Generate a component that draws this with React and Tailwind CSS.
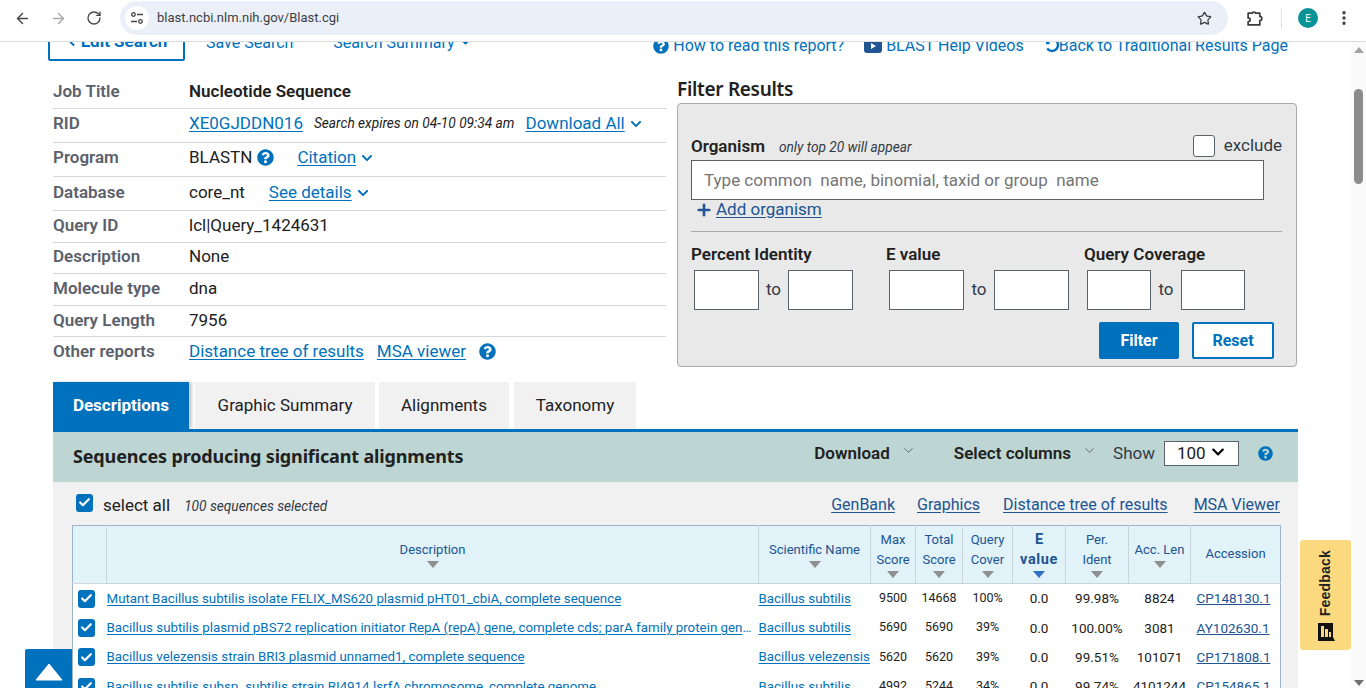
import React from "react";
import { ArrowLeft, ArrowRight, RotateCw, Star, EllipsisVertical, Plus, ChevronDown, Check, ChevronLeft } from "lucide-react";
import { FaQuestionCircle, FaChevronDown, FaCaretDown } from "react-icons/fa";

const Q = ({ cls = "text-[17px]" }) => <FaQuestionCircle className={`${cls} text-[#0071bc] shrink-0`} />;
const Chev = () => <FaChevronDown className="text-[12px] text-[#0071bc] shrink-0" />;
const A = ({ children, cls = "" }) => <a className={`text-[#0071bc] underline underline-offset-2 decoration-1 ${cls}`}>{children}</a>;

const Row = ({ h, label, children, last, pb = "pb-[2px]" }) => (
  <div className={`flex items-center ${h} ${pb} ${last ? "" : "border-b border-[#d6d7d9]"}`}>
    <div className="w-[136px] shrink-0 font-semibold text-[#5b616b]">{label}</div>
    <div className="flex items-center text-[#212121]">{children}</div>
  </div>
);

const Box = ({ w }) => <div className={`${w} h-[40px] bg-white border border-[#5b616b]`} />;

const CB = ({ size = "w-[17px] h-[18px]" }) => (
  <span className={`${size} bg-[#0071bc] rounded-[3px] flex items-center justify-center shrink-0`}>
    <Check className="w-[13px] h-[13px] text-white" strokeWidth={4} />
  </span>
);

const Th = ({ children, caret = "#8f8f8f", cls = "" }) => (
  <th className={`border-l border-[#c8d3da] border-b bg-[#e1f2f9] font-normal text-[13px] leading-[20px] text-[#205493] px-0 align-middle ${cls}`}>
    <div className="flex flex-col items-center -mt-[2px]">
      {children}
      <svg width="12" height="7" viewBox="0 0 12 7" className="mt-[1px]"><path d="M0 0h12L6 7z" fill={caret} /></svg>
    </div>
  </th>
);

const rows = [
  ["Mutant Bacillus subtilis isolate FELIX_MS620 plasmid pHT01_cbiA, complete sequence", "Bacillus subtilis", "9500", "14668", "100%", "0.0", "99.98%", "8824", "CP148130.1"],
  ["Bacillus subtilis plasmid pBS72 replication initiator RepA (repA) gene, complete cds; parA family protein gene, complete sequence", "Bacillus subtilis", "5690", "5690", "39%", "0.0", "100.00%", "3081", "AY102630.1"],
  ["Bacillus velezensis strain BRI3 plasmid unnamed1, complete sequence", "Bacillus velezensis", "5620", "5620", "39%", "0.0", "99.51%", "101071", "CP171808.1"],
  ["Bacillus subtilis subsp. subtilis strain RI4914 lsrfA chromosome, complete genome", "Bacillus subtilis", "4992", "5244", "34%", "0.0", "99.74%", "4101244", "CP154865.1"],
];

export default function App() {
  return (
    <div className="relative w-[1366px] h-[688px] overflow-hidden flex flex-col bg-white font-['Roboto',sans-serif] text-[17px] text-[#212121]">
      {/* browser bar */}
      <div className="relative z-10 h-[42px] shrink-0 bg-white border-b border-[#dcdcdc] flex items-start pt-[1px]">
        <div className="flex items-center w-[120px] h-[34px] pl-[14px] gap-[19px] text-[#474747]">
          <ArrowLeft className="w-[17px] h-[17px]" strokeWidth={2} />
          <ArrowRight className="w-[17px] h-[17px] text-[#a9a9a9]" strokeWidth={2} />
          <RotateCw className="w-[16px] h-[16px]" strokeWidth={2} />
        </div>
        <div className="w-[1108px] h-[34px] bg-[#ebf0f8] rounded-full flex items-center pl-[5px] pr-[16px]">
          <span className="w-[24px] h-[24px] rounded-full bg-white flex items-center justify-center">
            <svg width="14" height="14" viewBox="0 0 14 14" fill="none" stroke="#474747" strokeWidth="1.3"><circle cx="3.5" cy="3.5" r="1.8" /><path d="M7 3.5h6M1 10.5h6" /><circle cx="10.5" cy="10.5" r="1.8" /></svg>
          </span>
          <span className="ml-[8px] text-[13px] text-[#3c4043]">blast.ncbi.nlm.nih.gov/Blast.cgi</span>
          <Star className="ml-auto w-[15px] h-[15px] text-[#3c3c3c]" strokeWidth={2} />
        </div>
        <div className="flex items-center h-[34px] text-[#3c3c3c]">
          <svg width="17" height="15" viewBox="0 0 16 14" fill="none" stroke="#3c3c3c" strokeWidth="1.6" strokeLinejoin="round" className="ml-[18px]">
            <path d="M3 2H6C6 .5 9 .5 9 2H13V5C15.5 5 15.5 9 13 9V13H2V10C4.5 10 4.5 6.5 2 6.5V2z" />
          </svg>
          <span className="ml-[18px] w-px h-[20px] bg-[#d6e2f3]" />
          <span className="ml-[16px] w-[20px] h-[20px] rounded-full bg-[#0a9396] text-white text-[10px] flex items-center justify-center">E</span>
          <EllipsisVertical className="ml-[17px] w-[18px] h-[18px]" strokeWidth={2.5} />
        </div>
      </div>

      <div className="flex-1 flex min-h-0 overflow-hidden">
        <div className="flex-1 min-w-0 -mt-[19px] flex flex-col">
          {/* top action row */}
          <div className="flex items-center h-[39px] pl-[48px] pr-[63px] shrink-0 text-[16px]">
            <div className="w-[137px] h-[38px] self-start border-2 border-[#0071bc] rounded-[2px] flex items-center justify-center gap-[3px] font-bold text-[17px] text-[#0071bc]">
              <ChevronLeft className="w-[12px] h-[12px]" strokeWidth={4} /> Edit Search
            </div>
            <span className="ml-[21px] text-[#0071bc]">Save Search</span>
            <span className="ml-[40px] text-[#0071bc] flex items-center gap-[5px]">Search Summary <FaCaretDown className="text-[11px]" /></span>
            <span className="ml-auto flex items-center gap-[4px] text-[#0071bc] pt-[6px]"><Q cls="text-[16px]" />How to read this report?</span>
            <span className="ml-[20px] flex items-center gap-[4px] text-[#0071bc] pt-[6px]">
              <svg width="18" height="14" viewBox="0 0 18 14"><rect width="18" height="14" rx="3" fill="#205493" /><path d="M7 4l5 3-5 3z" fill="#fff" /></svg>
              BLAST Help Videos
            </span>
            <span className="ml-[20px] flex items-center text-[#0071bc] pt-[6px]">
              <svg width="16" height="16" viewBox="0 0 16 16" fill="none" stroke="#0071bc" strokeWidth="2.4" className="-mr-[1px]">
                <path d="M3.2 10.5A6 6 0 0 0 14 7A6 6 0 0 0 12 2.5M2 5h3.5" />
              </svg>
              Back to Traditional Results Page
            </span>
          </div>

          {/* summary + filter */}
          <div className="flex mt-[13px] pl-[53px] shrink-0">
            <div className="w-[613px] shrink-0">
              <Row h="h-[34px]" label="Job Title" pb="pb-0"><span className="font-semibold">Nucleotide Sequence</span></Row>
              <Row h="h-[34px]" label="RID" pb="pb-[4px]">
                <A>XE0GJDDN016</A>
                <i className="ml-[11px] text-[13.7px]">Search expires on 04-10 09:34 am</i>
                <A cls="ml-[11px]">Download All</A><span className="ml-[5px]"><Chev /></span>
              </Row>
              <Row h="h-[34px]" label="Program" pb="pb-[4px]">
                BLASTN<span className="ml-[5px]"><Q /></span>
                <A cls="ml-[23px]">Citation</A><span className="ml-[5px]"><Chev /></span>
              </Row>
              <Row h="h-[34px]" label="Database">
                core_nt
                <A cls="ml-[24px]">See details</A><span className="ml-[5px]"><Chev /></span>
              </Row>
              <Row h="h-[32px]" label="Query ID">lcl|Query_1424631</Row>
              <Row h="h-[31px]" label="Description">None</Row>
              <Row h="h-[32px]" label="Molecule type">dna</Row>
              <Row h="h-[31px]" label="Query Length" pb="pb-0">7956</Row>
              <Row h="h-[31px]" label="Other reports" last>
                <A>Distance tree of results</A>
                <A cls="ml-[13px]">MSA viewer</A>
                <span className="ml-[13px]"><Q /></span>
              </Row>
            </div>

            <div className="ml-[11px] w-[620px] shrink-0">
              <div className="h-[28px] flex items-center text-[19px] font-semibold font-['Noto_Sans',sans-serif] tracking-[-0.3px] text-[#212121]">Filter Results</div>
              <div className="h-[264px] bg-[#e9e9e9] border border-[#aaaaaa] rounded-[4px] pl-[13px] pr-[14px] pt-[30px] flex flex-col">
                <div className="flex items-center h-[26px]">
                  <span className="font-semibold">Organism</span>
                  <i className="ml-[14px] text-[13.7px] text-[#323a45]">only top 20 will appear</i>
                  <span className="ml-auto w-[22px] h-[22px] bg-white border border-[#5b616b] rounded-[3px] -mt-[2px]" />
                  <span className="ml-[9px] text-[#323a45] -mt-[2px]">exclude</span>
                </div>
                <div className="w-[573px] h-[40px] bg-white border border-[#5b616b] flex items-center pl-[12px] pt-[2px] text-[#757575] whitespace-pre">Type common  name, binomial, taxid or group  name</div>
                <div className="flex items-center h-[19px] pl-[4px]">
                  <Plus className="w-[18px] h-[18px] text-[#205493]" strokeWidth={3.5} />
                  <a className="ml-[3px] text-[#205493] underline underline-offset-2">Add organism</a>
                </div>
                <div className="h-px bg-[#aaaaaa] mt-[12px]" />
                <div className="flex mt-[13px] h-[20px] items-center font-semibold">
                  <span className="w-[195px]">Percent Identity</span>
                  <span className="w-[198px]">E value</span>
                  <span>Query Coverage</span>
                </div>
                <div className="flex items-center mt-[5px] pl-[3px] text-[#323a45]">
                  <Box w="w-[65px]" /><span className="w-[29px] text-center">to</span><Box w="w-[65px]" />
                  <span className="w-[36px]" />
                  <Box w="w-[75px]" /><span className="w-[30px] text-center">to</span><Box w="w-[75px]" />
                  <span className="w-[18px]" />
                  <Box w="w-[64px]" /><span className="w-[30px] text-center">to</span><Box w="w-[64px]" />
                </div>
                <div className="flex justify-end mt-[12px] gap-[13px] pr-[8px] text-[16px]">
                  <div className="w-[80px] h-[37px] bg-[#0071bc] rounded-[2px] text-white font-bold flex items-center justify-center">Filter</div>
                  <div className="w-[82px] h-[37px] bg-white border-2 border-[#0071bc] rounded-[2px] text-[#0071bc] font-bold flex items-center justify-center">Reset</div>
                </div>
              </div>
            </div>
          </div>

          {/* tabs */}
          <div className="flex mt-[14px] ml-[53px] h-[47px] w-[1245px] shrink-0">
            <div className="w-[136px] bg-[#0071bc] text-white font-bold flex items-center justify-center shadow-[3px_0_3px_rgba(0,0,0,0.2)]">Descriptions</div>
            <div className="ml-[6px] w-[180px] bg-[#f1f1f1] flex items-center justify-center">Graphic Summary</div>
            <div className="ml-[4px] w-[130px] bg-[#f1f1f1] flex items-center justify-center">Alignments</div>
            <div className="ml-[5px] w-[122px] bg-[#f1f1f1] flex items-center justify-center">Taxonomy</div>
          </div>

          {/* results */}
          <div className="ml-[53px] w-[1245px] border-t-[3px] border-[#0071bc] flex-1 min-h-0 flex flex-col bg-[#f1f1f1]">
            <div className="h-[50px] shrink-0 bg-[#bdd6d3] flex items-center pl-[20px] pr-[25px]">
              <span className="text-[18px] font-bold font-['Noto_Sans',sans-serif] tracking-[-0.15px] -mt-[2px]">Sequences producing significant alignments</span>
              <div className="ml-auto flex items-center -mt-[7px]">
                <span className="font-semibold">Download</span>
                <ChevronDown className="ml-[11px] -mt-[6px] w-[15px] h-[15px] text-[#5b616b]" strokeWidth={1.5} />
                <span className="ml-[38px] font-semibold">Select columns</span>
                <ChevronDown className="ml-[11px] -mt-[6px] w-[15px] h-[15px] text-[#5b616b]" strokeWidth={1.5} />
                <span className="ml-[16px] text-[#323a45]">Show</span>
                <div className="ml-[9px] w-[75px] h-[25px] bg-white border border-[#5b616b] flex items-center pl-[12px] gap-[5px]">100 <FaChevronDown className="text-[14px] text-black -mt-[4px]" /></div>
                <span className="ml-[19px]"><Q cls="text-[15px]" /></span>
              </div>
            </div>
            <div className="flex items-center h-[43px] shrink-0 pl-[23px] pr-[18px]">
              <span className="-mt-[2px]"><CB /></span>
              <span className="ml-[10px] pt-[5px]">select all</span>
              <i className="ml-[14px] text-[13.7px] text-[#323a45] pt-[5px]">100 sequences selected</i>
              <div className="ml-auto flex text-[16px] text-[#205493] pt-[3px]">
                <a className="underline underline-offset-2">GenBank</a>
                <a className="ml-[22px] underline underline-offset-2">Graphics</a>
                <a className="ml-[23px] underline underline-offset-2">Distance tree of results</a>
                <a className="ml-[26px] underline underline-offset-2">MSA Viewer</a>
              </div>
            </div>
            <div className="ml-[19px] w-[1208px]">
              <table className="table-fixed w-full border-collapse border border-[#9db4c8] bg-white text-[13.33px]">
                <colgroup>
                  <col className="w-[34px]" /><col className="w-[652px]" /><col className="w-[112px]" /><col className="w-[45px]" /><col className="w-[47px]" /><col className="w-[50px]" /><col className="w-[53px]" /><col className="w-[63px]" /><col className="w-[62px]" /><col className="w-[90px]" />
                </colgroup>
                <thead>
                  <tr className="h-[58px] border-b border-[#d6d7d9]">
                    <th className="bg-[#e1f2f9]" />
                    <Th>Description</Th>
                    <Th>Scientific Name</Th>
                    <Th><span>Max</span><span>Score</span></Th>
                    <Th><span>Total</span><span>Score</span></Th>
                    <Th><span>Query</span><span>Cover</span></Th>
                    <Th caret="#2f6fc4"><b className="text-[#205493] text-[14.5px]">E</b><b className="text-[#205493] text-[14.5px] tracking-[0.6px]">value</b></Th>
                    <Th><span>Per.</span><span>Ident</span></Th>
                    <Th>Acc. Len</Th>
                    <th className="border-l border-[#c8d3da] bg-[#e1f2f9] font-normal text-[13px] text-[#205493]"><span className="block -mt-[2px]">Accession</span></th>
                  </tr>
                </thead>
                <tbody>
                  {rows.map((r) => (
                    <tr key={r[8]} className="h-[29.5px]">
                      <td className="pl-[5px]"><CB /></td>
                      <td className="pr-[6px]"><A cls="block truncate underline-offset-1">{r[0]}</A></td>
                      <td className="whitespace-nowrap"><A cls="underline-offset-1">{r[1]}</A></td>
                      {r.slice(2, 5).map((v, i) => <td key={i} className="text-center text-[12.5px] text-[#212121]">{v}</td>)}
                      {r.slice(5, 8).map((v, i) => <td key={i} className="text-center text-[13.5px] text-[#212121]">{v}</td>)}
                      <td className="pl-[6px] text-[13.5px]"><a className="text-[#205493] underline underline-offset-1">{r[8]}</a></td>
                    </tr>
                  ))}
                </tbody>
              </table>
            </div>
          </div>
        </div>

        {/* scrollbar */}
        <div className="w-[15px] shrink-0 bg-[#fafafa] flex flex-col items-center pt-[5px]">
          <svg width="10" height="6" viewBox="0 0 10 6"><path d="M0 6l5-6 5 6z" fill="#a3a3a3" /></svg>
          <div className="w-[9px] h-[95px] mt-[36px] bg-[#8c8c8c] rounded-full" />
          <svg width="10" height="6" viewBox="0 0 10 6" className="mt-auto mb-[2px]"><path d="M0 0l5 6 5-6z" fill="#707070" /></svg>
        </div>
      </div>

      {/* overlays */}
      <div className="absolute left-[25px] top-[649px] w-[47px] h-[39px] bg-[#0071bc] rounded-tl-[2px] flex items-center justify-center">
        <svg width="28" height="18" viewBox="0 0 28 18" className="mt-[6px]"><path d="M14 1L27 17H1z" fill="#fff" stroke="#fff" strokeLinejoin="round" /></svg>
      </div>
      <div className="absolute left-[1300px] top-[540px] w-[51px] h-[110px] bg-[#fbd97f] rounded-[3px] flex flex-col items-center justify-center pt-[2px]">
        <span className="[writing-mode:vertical-rl] rotate-180 font-['Liberation_Sans',sans-serif] font-bold text-[14px] text-[#212121] tracking-[0.2px]">Feedback</span>
        <svg width="18" height="20" viewBox="0 0 18 20" className="mt-[6px]"><path d="M1 1h15v14l2 4H1z" fill="#111" /><path d="M4 4h3v11H4zM8 7h3v8H8zM12 10h2v5h-2z" fill="#fbd97f" /></svg>
      </div>
    </div>
  );
}
